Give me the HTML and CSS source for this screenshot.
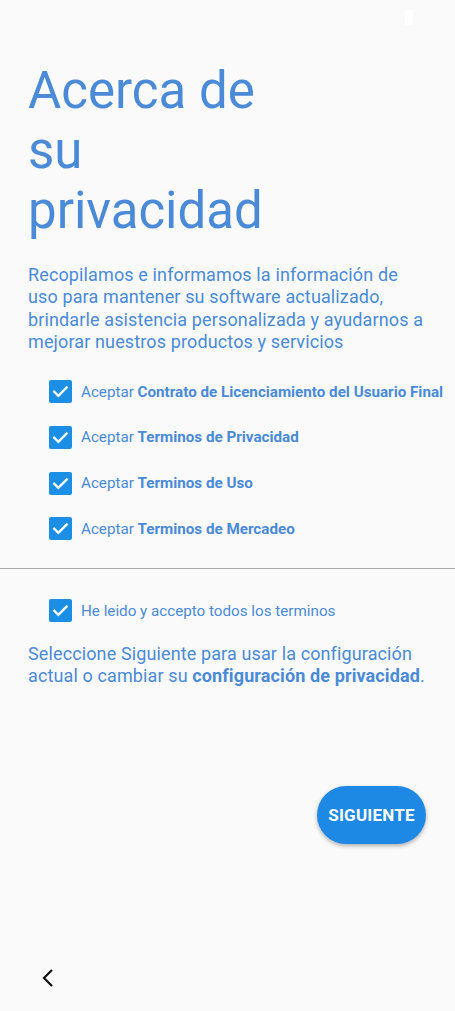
FILE: index.html
```html
<!DOCTYPE html>
<html lang="es">
<head>
<meta charset="utf-8">
<link rel="stylesheet" href="styles.css">
</head>
<body>
<div class="screen">
  <div class="status">
    <svg class="battery" width="8" height="16" viewBox="0 0 8 16"><rect x="2" y="0" width="4" height="2" fill="#fff"/><rect x="0" y="1.5" width="8" height="14.5" rx="1" fill="#fff"/></svg>
  </div>
  <h1 class="title">Acerca de<br>su<br>privacidad</h1>
  <p class="intro">Recopilamos e informamos la información de uso para mantener su software actualizado, brindarle asistencia personalizada y ayudarnos a mejorar nuestros productos y servicios</p>
  <ul class="terms">
    <li class="check-row"><span class="box"><svg viewBox="0 0 24 24" width="23" height="23"><path d="M5.5 12.2l4.3 4.3 8.7-8.7" fill="none" stroke="#fff" stroke-width="2.4" stroke-linecap="square"/></svg></span><span class="label">Aceptar <b>Contrato de Licenciamiento del Usuario Final</b></span></li>
    <li class="check-row"><span class="box"><svg viewBox="0 0 24 24" width="23" height="23"><path d="M5.5 12.2l4.3 4.3 8.7-8.7" fill="none" stroke="#fff" stroke-width="2.4" stroke-linecap="square"/></svg></span><span class="label">Aceptar <b>Terminos de Privacidad</b></span></li>
    <li class="check-row"><span class="box"><svg viewBox="0 0 24 24" width="23" height="23"><path d="M5.5 12.2l4.3 4.3 8.7-8.7" fill="none" stroke="#fff" stroke-width="2.4" stroke-linecap="square"/></svg></span><span class="label">Aceptar <b>Terminos de Uso</b></span></li>
    <li class="check-row"><span class="box"><svg viewBox="0 0 24 24" width="23" height="23"><path d="M5.5 12.2l4.3 4.3 8.7-8.7" fill="none" stroke="#fff" stroke-width="2.4" stroke-linecap="square"/></svg></span><span class="label">Aceptar <b>Terminos de Mercadeo</b></span></li>
  </ul>
  <hr class="divider">
  <div class="check-row all"><span class="box"><svg viewBox="0 0 24 24" width="23" height="23"><path d="M5.5 12.2l4.3 4.3 8.7-8.7" fill="none" stroke="#fff" stroke-width="2.4" stroke-linecap="square"/></svg></span><span class="label">He leido y accepto todos los terminos</span></div>
  <p class="note">Seleccione Siguiente para usar la configuración actual o cambiar su <b>configuración de privacidad</b>.</p>
  <div class="actions"><button class="next">SIGUIENTE</button></div>
  <div class="nav">
    <svg width="14" height="20" viewBox="0 0 14 20"><path d="M11 2L3 10l8 8" fill="none" stroke="#111" stroke-width="2.2"/></svg>
  </div>
</div>
</body>
</html>
```

FILE: styles.css
```css
* { box-sizing: border-box; }
html, body { margin: 0; padding: 0; background: #fafafa; }
body { font-family: Roboto, "Noto Sans", sans-serif; color: #4a8ad6; }
.screen { width: 455px; height: 1011px; display: flex; flex-direction: column; position: relative; }
.status { height: 36px; display: flex; justify-content: flex-end; padding: 9px 42px 0 0; }
.battery { display: block; }
.title { margin: 25px 0 0 28px; font-size: 51px; line-height: 60px; font-weight: 400; color: #4a8ad6; }
.intro { margin: 23px 24px 0 28px; font-size: 18px; line-height: 22.3px; letter-spacing: 0.13px; }
.terms { list-style: none; margin: 27px 0 0 0; padding: 0; display: flex; flex-direction: column; gap: 22.7px; }
.check-row { display: flex; align-items: center; padding-left: 49px; gap: 9px; height: 23px; font-size: 15.2px; }
.box { width: 23px; height: 23px; border-radius: 2px; background: #1a8fe5; display: flex; flex: none; }
.box svg { display: block; }
.label { white-space: nowrap; }
.label b { font-weight: 700; }
.divider { margin: 28px 0 0 0; border: 0; border-top: 1px solid #a8a8a8; height: 0; }
.all { margin-top: 30px; }
.note { margin: 21px 20px 0 28px; font-size: 18px; line-height: 22px; letter-spacing: 0.12px; }
.note b { font-weight: 700; }
.actions { display: flex; justify-content: flex-end; padding-right: 29px; margin-top: 99px; }
.next { width: 109px; height: 58px; border-radius: 29px; border: 0; background: #1e88e5; color: #fff; font-family: Roboto, sans-serif; font-weight: 700; font-size: 17px; letter-spacing: 0.2px; box-shadow: 0 2px 4px rgba(0,0,0,0.3); padding: 0; }
.nav { margin-top: auto; height: 66px; display: flex; align-items: center; padding-left: 41px; padding-bottom: 0; }
.nav svg { display: block; }
```
